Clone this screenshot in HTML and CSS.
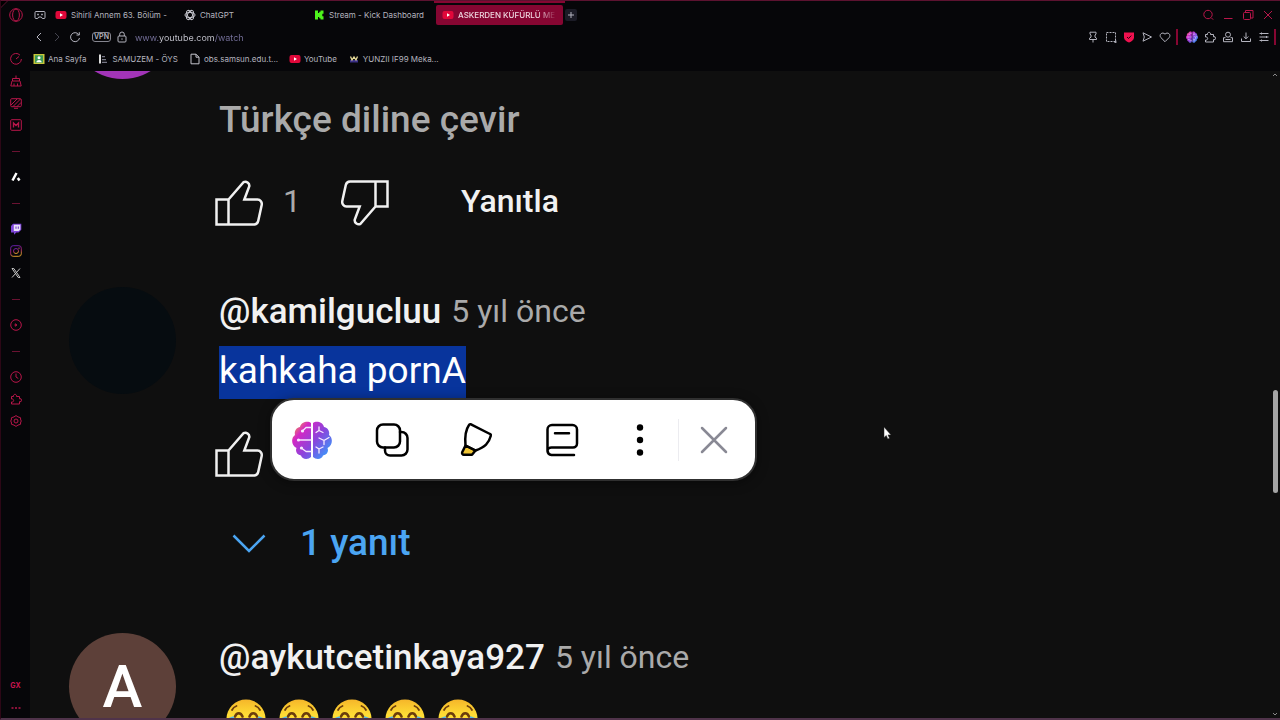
FILE: index.html
```html
<!DOCTYPE html>
<html lang="tr">
<head>
  <meta charset="UTF-8">
  <meta name="viewport" content="width=device-width, initial-scale=1">
  <title>YouTube</title>
  <link rel="stylesheet" href="styles.css">
</head>
<body>
  <!-- Shared icons -->
  <svg class="sprite" aria-hidden="true">
    <defs>
      <linearGradient id="brain-fill" x1="0" y1="0.1" x2="1" y2="0.9">
        <stop offset="0" stop-color="#f5a040"/>
        <stop offset="0.22" stop-color="#d428c4"/>
        <stop offset="0.55" stop-color="#8a45dc"/>
        <stop offset="1" stop-color="#2fa4ff"/>
      </linearGradient>
      <linearGradient id="insta" x1="0" y1="0" x2="0.3" y2="1">
        <stop offset="0" stop-color="#5b1fb0"/>
        <stop offset="0.6" stop-color="#a02070"/>
        <stop offset="1" stop-color="#d99a2b"/>
      </linearGradient>
      <linearGradient id="face" x1="0" y1="0" x2="0" y2="1">
        <stop offset="0" stop-color="#f5b62a"/>
        <stop offset="0.4" stop-color="#ffdd35"/>
        <stop offset="1" stop-color="#f9c62d"/>
      </linearGradient>
      <symbol id="youtube" viewBox="0 0 12 12">
        <rect x="0.5" y="2" width="11" height="8" rx="2" fill="#e0083a"/>
        <path d="M5 4.3v3.4L8 6z" fill="#fff"/>
      </symbol>
      <symbol id="brain" viewBox="0 0 40 40">
        <path stroke="none" fill="url(#brain-fill)" d="M19 3v34c-3 3-9 2.500-10-1.500C5 35 3 31.500 4.500 28-.5 26-1.500 18 3 15 2 11 4.500 7.500 8 7c1-5 8-6.500 11-4zM21 3c3-2.500 10-1 11 4 3.500.5 6 4 5 8 4.500 3 3.500 11-1.500 13 1.500 3.500-.5 7-4.500 7.500-1 4-7 4.500-10 1.500z"/>
        <g fill="none" stroke="#f6e9ff" stroke-width="1.300" stroke-linecap="round">
          <path d="M19 7.500h-5l-3 3M19 20H6.500M19 31.500h-5l-4-3M27 7v3.500l-3 2M27 10.500l4 2M27 18l5 2.500 5-3M32 20.500v4M27 33v-4l-3-2M27 29l4-2"/>
        </g>
        <g fill="#f6e9ff" stroke="none"><circle cx="10.500" cy="11" r="1.600"/><circle cx="6.500" cy="20" r="1.600"/><circle cx="9.500" cy="28" r="1.600"/></g>
      </symbol>
      <symbol id="puzzle" viewBox="0 0 12 12">
        <path d="M1.500 3.500h2a1.600 1.600 0 1 1 3 0h3v2.300a1.500 1.500 0 1 1 0 2.800V11h-8V9a1.600 1.600 0 1 0 0-3z"/>
      </symbol>
      <symbol id="like" viewBox="0 0 48 48">
        <path d="M1.500 20.500h12v25h-12zM13.500 20.500 28.500 3.200a4 4 0 0 1 5.800 4l-5 13.300h13.200a4.500 4.500 0 0 1 4.200 5.500l-3.500 16a4.500 4.500 0 0 1-4.200 3.500H13.500"/>
      </symbol>
      <symbol id="laugh" viewBox="0 0 40 40">
        <circle cx="20" cy="20" r="19.500" fill="url(#face)"/>
        <g fill="none" stroke="#6b3d0c" stroke-linecap="round">
          <path stroke-width="1.800" d="M6 11c1-2 2.500-3.300 4.500-4M34 11c-1-2-2.500-3.300-4.500-4"/>
          <path stroke-width="2.500" d="M9 17.500c1.500-4.500 6-4.500 7.500 0M23.500 17.500c1.500-4.500 6-4.500 7.500 0"/>
        </g>
        <path d="M8 23h24c0 14-24 14-24 0z" fill="#6b3d0c"/>
        <path d="M1 21c1-2 4-3.500 7-3.500 0 4-2 8-5 8s-3-2.500-2-4.500zM39 21c-1-2-4-3.500-7-3.500 0 4 2 8 5 8s3-2.500 2-4.500z" fill="#4fb6ea"/>
      </symbol>
    </defs>
  </svg>

  <div class="window">
    <svg class="window-corner" viewBox="0 0 10 10"><path d="M0 0h9L0 9z" fill="#000"/><path d="M0.500 10V8L8 0.500h2" fill="none" stroke="#5c1230"/></svg>

    <nav class="sidebar" aria-label="Kenar çubuğu">
      <button class="side-item logo" aria-label="Opera menüsü"><svg class="icon-lg" viewBox="0 0 14 14"><circle cx="7" cy="7" r="6.300"/><ellipse cx="7" cy="7" rx="3.400" ry="6"/></svg></button>
      <button class="side-item" aria-label="GX Control"><svg class="icon" viewBox="0 0 12 12"><path d="M10 2.200A5.400 5.400 0 1 0 11.400 6M6 6l3-2.500"/></svg></button>
      <button class="side-item" aria-label="GX Cleaner"><svg class="icon" viewBox="0 0 12 12"><path d="M6 .5v3M2.500 3.500h7v2.500h-7zM2 6 .8 11h10.400L10 6M4 8.500V11M7.500 8.500V11"/></svg></button>
      <button class="side-item" aria-label="GX Mods"><svg class="icon" viewBox="0 0 12 12"><rect x=".7" y="1.700" width="10.600" height="8" rx="1"/><path d="m1 8 6-6M3 9.500l7.500-7.500M7 9.500l4-4M4 11.300h4"/></svg></button>
      <button class="side-item" aria-label="Mod mağazası"><svg class="icon" viewBox="0 0 12 12"><rect x=".7" y=".7" width="10.600" height="10.600" rx="1"/><path d="M3.500 8.500V4L6 6.500 8.500 4v4.500" stroke-width="1.400"/></svg></button>
      <span class="side-line"></span>
      <button class="side-item" aria-label="Aria"><svg class="icon" viewBox="0 0 12 12"><path d="M6.500 2 2.500 9.500M7.800 7l1.700 2.500" stroke="#fff" stroke-width="2.500"/></svg></button>
      <span class="side-line"></span>
      <button class="side-item" aria-label="Twitch"><svg class="icon" viewBox="0 0 12 12"><path d="M1 3 3 .8h8.300v6L8.500 9.500H6.300L4 11.700V9.500H1z" fill="#7d45d8" stroke="none"/><path d="M3.800 1.800h6.500v4.600L8.700 8H3.800z" fill="#e9e0f8" stroke="none"/><path d="M6 3.500v2.300M8.300 3.500v2.300" stroke="#6a35c0"/></svg></button>
      <button class="side-item" aria-label="Instagram"><svg class="icon" viewBox="0 0 12 12"><g stroke="url(#insta)"><rect x=".7" y=".7" width="10.600" height="10.600" rx="2.500"/><circle cx="6" cy="6" r="2.500"/><circle cx="9" cy="3" r=".3"/></g></svg></button>
      <button class="side-item" aria-label="X"><svg class="icon" viewBox="0 0 12 12"><path d="M2 1.500h1.800l6.200 9H8.200zM10 1.500 2 10.500" stroke="#c4c4c4"/></svg></button>
      <span class="side-line"></span>
      <button class="side-item" aria-label="Oynatıcı"><svg class="icon" viewBox="0 0 12 12"><circle cx="6" cy="6" r="5.300"/><path d="M5.200 4.800v2.400L7 6z"/></svg></button>
      <span class="side-line"></span>
      <button class="side-item" aria-label="Geçmiş"><svg class="icon" viewBox="0 0 12 12"><circle cx="6" cy="6" r="5.300"/><path d="M6 2.500V6l2.300 1.500"/></svg></button>
      <button class="side-item" aria-label="Uzantılar"><svg class="icon"><use href="#puzzle"/></svg></button>
      <button class="side-item" aria-label="Ayarlar"><svg class="icon" viewBox="0 0 12 12"><path d="m6 .6 2 1.300 2.500.8.200 2.300.7 1-.7 1-.2 2.300-2.500.8-2 1.300-2-1.300-2.500-.8L1.300 7 .6 6l.7-1 .2-2.300L4 1.900z"/><circle cx="6" cy="6" r="2"/></svg></button>
      <div class="side-bottom">
        <button class="side-item gx">GX</button>
        <button class="side-item" aria-label="Daha fazla"><svg class="icon" viewBox="0 0 12 12"><path d="M1.500 7h2M5 7h2M8.500 7h2" stroke-width="1.500"/></svg></button>
      </div>
    </nav>

    <div class="main">
      <header class="chrome">
        <div class="row tabs">
          <button class="tool island" aria-label="Oyun köşesi"><svg class="icon" viewBox="0 0 12 12"><path d="M2 2.500h8a1 1 0 0 1 1 1v5a1 1 0 0 1-1 1H8.300L7.300 8H4.700L3.700 9.500H2a1 1 0 0 1-1-1v-5a1 1 0 0 1 1-1z"/><path d="M3.200 5.500h1.600M7.200 5.500h1.600" stroke-width="1.500"/></svg></button>
          <button class="tab"><svg class="favicon"><use href="#youtube"/></svg><span class="tab-title">Sihirli Annem 63. Bölüm -</span></button>
          <button class="tab"><svg class="favicon line" viewBox="0 0 12 12"><g><ellipse cx="6" cy="6" rx="5" ry="2.600"/><ellipse cx="6" cy="6" rx="5" ry="2.600" transform="rotate(60 6 6)"/><ellipse cx="6" cy="6" rx="5" ry="2.600" transform="rotate(120 6 6)"/></g></svg><span class="tab-title">ChatGPT</span></button>
          <button class="tab"><svg class="favicon" viewBox="0 0 12 12"><path d="M2 1.500h3v2.500h1.200V2.700H7.500V1.500h3v3.300H9.300V7.200h1.200v3.300h-3V9.300H6.200V8H5v2.500H2z" fill="#4df41c"/></svg><span class="tab-title">Stream - Kick Dashboard</span></button>
          <button class="tab active"><svg class="favicon"><use href="#youtube"/></svg><span class="tab-title">ASKERDEN KÜFÜRLÜ ME</span></button>
          <button class="new-tab" aria-label="Yeni sekme"><svg class="icon" viewBox="0 0 12 12"><path d="M6 3v6M3 6h6"/></svg></button>
          <div class="window-buttons">
            <button class="tool" aria-label="Ara"><svg class="icon" viewBox="0 0 12 12"><circle cx="6" cy="5.500" r="4.200"/><path d="m9.200 8.700 2 2"/></svg></button>
            <button class="tool" aria-label="Küçült"><svg class="icon" viewBox="0 0 12 12"><path d="M2 9.500h8.500"/></svg></button>
            <button class="tool" aria-label="Geri yükle"><svg class="icon" viewBox="0 0 12 12"><rect x="1.500" y="3.500" width="7" height="7" rx="1"/><path d="M3.500 3.500v-2h7.500v7.500H8.500"/></svg></button>
            <button class="tool" aria-label="Kapat"><svg class="icon" viewBox="0 0 12 12"><path d="m2 2 8 8M10 2l-8 8"/></svg></button>
          </div>
        </div>

        <div class="row address">
          <button class="tool" aria-label="Geri"><svg class="icon" viewBox="0 0 12 12"><path d="M8 2 4 6l4 4"/></svg></button>
          <button class="tool dim" aria-label="İleri"><svg class="icon" viewBox="0 0 12 12"><path d="m4 2 4 4-4 4"/></svg></button>
          <button class="tool" aria-label="Yenile"><svg class="icon" viewBox="0 0 12 12"><path d="M9.700 3.500A4.500 4.500 0 1 0 10.500 7M10.300 1.200v2.800H7.500"/></svg></button>
          <button class="vpn">VPN</button>
          <svg class="icon lock" viewBox="0 0 12 12"><rect x="2" y="5" width="8" height="6" rx="1"/><path d="M3.700 5V3.300a2.300 2.300 0 0 1 4.600 0V5M6 7.300v1.500"/></svg>
          <input class="url" type="text" aria-label="Adres" value="www.youtube.com/watch">
          <div class="tools">
            <button class="tool" aria-label="Sabitle"><svg class="icon" viewBox="0 0 12 12"><path d="M3 1.200h6v2L8 4v2.200l1.500 1v1.300h-7V7.200l1.500-1V4L3 3.200zM6 8.500v3"/></svg></button>
            <button class="tool" aria-label="Anlık görüntü"><svg class="icon" viewBox="0 0 12 12"><rect x="1.500" y="1.500" width="9" height="9" stroke-dasharray="2 1"/><path d="M9 11h2.500M10.700 9v3"/></svg></button>
            <button class="tool" aria-label="Reklam engelleyici"><svg class="icon" viewBox="0 0 12 12"><path d="M1 1.500h10v5C11 9 8.500 10.500 6 11.500 3.500 10.500 1 9 1 6.500z" fill="#f0114f" stroke="none"/><path d="M4 6l1.500 1.500L8.300 4.600" stroke="#25000d"/></svg></button>
            <button class="tool" aria-label="Gönder"><svg class="icon" viewBox="0 0 12 12"><path d="M2 1.800 10.500 6 2 10.200 3.300 6z"/></svg></button>
            <button class="tool" aria-label="Favorilere ekle"><svg class="icon" viewBox="0 0 12 12"><path d="M6 10.700 1.800 6.500C-.5 3.500 3.500.3 6 3.200 8.500.3 12.500 3.500 10.200 6.500z"/></svg></button>
            <span class="bar"></span>
            <button class="tool ai" aria-label="Yapay zeka"><svg class="icon"><use href="#brain"/></svg></button>
            <button class="tool" aria-label="Eklentiler"><svg class="icon"><use href="#puzzle"/></svg></button>
            <button class="tool" aria-label="Profil"><svg class="icon" viewBox="0 0 12 12"><circle cx="6" cy="3.700" r="2.500"/><path d="M3.500 6.700h-2v4h9v-4h-2M3.500 8.500h5"/></svg></button>
            <button class="tool" aria-label="İndirilenler"><svg class="icon" viewBox="0 0 12 12"><path d="M6 1.500v6M3.700 5.500 6 7.800l2.300-2.300M1.500 7.500v3h9v-3"/></svg></button>
            <button class="tool" aria-label="Kolay kurulum"><svg class="icon" viewBox="0 0 12 12"><path d="M1.500 2.500h9M1.500 6h9M1.500 9.500h9M3.500 1.500v2M8.500 5v2M3.500 8.500v2"/></svg></button>
            <span class="bar last"></span>
          </div>
        </div>

        <nav class="row bookmarks" aria-label="Yer imleri">
          <a class="bookmark" href="#"><svg class="favicon" viewBox="0 0 12 12"><rect x=".5" y="1" width="11" height="10" fill="#c7c63a"/><rect x="2" y="2.300" width="8" height="7.400" fill="#3c9a58"/><circle cx="6" cy="4.800" r="1.500" fill="#fff"/><path d="M3.300 9.300c.5-3 5-3 5.400 0z" fill="#fff"/></svg>Ana Sayfa</a>
          <a class="bookmark" href="#"><svg class="favicon" viewBox="0 0 12 12"><path d="M2 1.500h2v9H2z" fill="#ddd"/><path d="M5 3h3v1.300H5zM5 6h4v1.300H5zM5 8.700h5V10H5z" fill="#777786"/></svg>SAMUZEM - ÖYS</a>
          <a class="bookmark" href="#"><svg class="favicon line" viewBox="0 0 12 12"><path d="M2 1.200h5L10 4.200v6.600H2zM7 1.200v3h3"/></svg>obs.samsun.edu.t...</a>
          <a class="bookmark" href="#"><svg class="favicon"><use href="#youtube"/></svg>YouTube</a>
          <a class="bookmark" href="#"><svg class="favicon" viewBox="0 0 12 12"><path d="M2 7h8v2.500H2z" fill="#3a2f86"/><path d="m2.500 3.500 1.500 3.500L6 4l2 3 1.500-3.500" fill="none" stroke="#e8dc9a" stroke-width="1.300"/></svg>YUNZII IF99 Meka...</a>
        </nav>
      </header>

      <div class="viewport">
        <main class="comments">
          <article class="comment scrolled">
            <div class="avatar purple"></div>
            <div class="body">
              <button class="translate">Türkçe diline çevir</button>
              <div class="actions">
                <button class="vote" aria-label="Beğen"><svg><use href="#like"/></svg></button>
                <span class="count">1</span>
                <button class="vote down" aria-label="Beğenme"><svg><use href="#like"/></svg></button>
                <button class="reply">Yanıtla</button>
              </div>
            </div>
          </article>

          <article class="comment">
            <div class="avatar dark"></div>
            <div class="body">
              <div class="author"><a class="name" href="#">@kamilgucluu</a><a class="time" href="#">5 yıl önce</a></div>
              <p class="text"><span class="selected">kahkaha pornA</span></p>
              <div class="actions">
                <button class="vote" aria-label="Beğen"><svg><use href="#like"/></svg></button>
              </div>
              <button class="replies"><svg viewBox="0 0 34 20"><path d="M1.500 1.500 17 17 32.500 1.500"/></svg><span class="replies-label">1 yanıt</span></button>

              <!-- Selection popup -->
              <div class="popup" role="toolbar" aria-label="Metin seçimi">
                <button class="popup-item" aria-label="Yapay zeka"><svg><use href="#brain"/></svg></button>
                <button class="popup-item" aria-label="Kopyala"><svg viewBox="0 0 40 40"><rect x="5" y="4.500" width="23" height="23" rx="6"/><path d="M28 12h1.500a6 6 0 0 1 6 6v11.500a6 6 0 0 1-6 6H18a5 5 0 0 1-5-5v-3"/></svg></button>
                <button class="popup-item marker" aria-label="Vurgula"><svg viewBox="0 0 40 40"><path d="m8.500 25.500 10 5-3.500 4.300H7a1.800 1.800 0 0 1-1.800-2.500z" fill="#f0c534"/><path d="M13.500 4.200 33 14a1.500 1.500 0 0 1 .8 1.800C32 23 28 27 18.500 30.500l-10-5C7.500 15 8.500 10 12 5a1.300 1.300 0 0 1 1.500-.8z"/></svg></button>
                <button class="popup-item" aria-label="Sözlük"><svg viewBox="0 0 40 40"><path d="M32 35H9.500A4.500 4.500 0 0 1 5.500 31V9.500a4.500 4.500 0 0 1 4.500-4.500h20.500a4.500 4.500 0 0 1 4.500 4.500v14a4 4 0 0 1-4 4H9.500a4 3.700 0 0 0-4 3.700M13 13.200h14"/></svg></button>
                <button class="popup-item more" aria-label="Diğer"><svg viewBox="0 0 40 40"><g fill="#000" stroke="none"><circle cx="20" cy="7.500" r="3.200"/><circle cx="20" cy="20" r="3.200"/><circle cx="20" cy="32.500" r="3.200"/></g></svg></button>
                <span class="popup-divider"></span>
                <button class="popup-item close" aria-label="Kapat"><svg viewBox="0 0 40 40"><path d="m8 8 24 24M32 8 8 32"/></svg></button>
              </div>
            </div>
          </article>

          <article class="comment">
            <div class="avatar brown">A</div>
            <div class="body">
              <div class="author"><a class="name" href="#">@aykutcetinkaya927</a><a class="time" href="#">5 yıl önce</a></div>
              <p class="text emojis">
                <svg role="img" aria-label="gülen yüz"><use href="#laugh"/></svg>
                <svg role="img" aria-label="gülen yüz"><use href="#laugh"/></svg>
                <svg role="img" aria-label="gülen yüz"><use href="#laugh"/></svg>
                <svg role="img" aria-label="gülen yüz"><use href="#laugh"/></svg>
                <svg role="img" aria-label="gülen yüz"><use href="#laugh"/></svg>
              </p>
            </div>
          </article>
        </main>

        <div class="scrollbar">
          <svg viewBox="0 0 8 8"><path d="m2 5 2-2 2 2"/></svg>
          <div class="track-above"></div>
          <div class="thumb"></div>
          <div class="track-below"></div>
          <svg viewBox="0 0 8 8"><path d="m2 3 2 2 2-2"/></svg>
        </div>
      </div>
    </div>

    <svg class="cursor" viewBox="0 0 9 14"><path d="M1 1v10.500l2.300-2 1.500 3.500 1.700-.8L5 8.900h3z" fill="#fff" stroke="#222" stroke-width=".5"/></svg>
  </div>
</body>
</html>
```
FILE: styles.css
```css
* {
  box-sizing: border-box;
}

body {
  margin: 0;
  background: #060609;
  color: #f1f1f1;
  font-family: Roboto, "Liberation Sans", sans-serif;
}

button {
  padding: 0;
  border: 0;
  background: none;
  color: inherit;
  font: inherit;
  cursor: pointer;
}

a {
  color: inherit;
  text-decoration: none;
}

svg {
  display: block;
  flex: none;
  fill: none;
}

.sprite {
  position: absolute;
  width: 0;
  height: 0;
}

.window {
  position: relative;
  display: flex;
  height: 100vh;
  overflow: hidden;
  border: 1px solid #5c1230;
  border-left-color: #2c0716;
  border-right: 0;
  border-bottom: 2px solid #50334a;
}

.window-corner {
  position: absolute;
  top: -1px;
  left: -1px;
  width: 10px;
  height: 10px;
}

.icon {
  width: 12px;
  height: 12px;
  stroke: currentColor;
}

.icon-lg {
  width: 14px;
  height: 14px;
  stroke: currentColor;
}

/* Sidebar */
.sidebar {
  display: flex;
  flex-direction: column;
  flex: none;
  width: 29px;
  padding-top: 3px;
  color: #b8164a;
}

.side-item {
  display: flex;
  flex: none;
  align-items: center;
  justify-content: center;
  height: 22px;
}

.logo {
  margin-bottom: 22px;
}

.side-line {
  display: flex;
  flex: none;
  align-items: center;
  justify-content: center;
  height: 30px;
}

.side-line::after {
  content: "";
  width: 8px;
  height: 1px;
  background: #6a1232;
}

.side-bottom {
  display: flex;
  flex-direction: column;
  margin-top: auto;
}

.gx {
  font: 700 7px Inter, sans-serif;
  color: #c91450;
}

/* Browser bars */
.main {
  display: flex;
  flex-direction: column;
  flex: 1;
  min-width: 0;
}

.chrome {
  flex: none;
  padding: 3px 0 1px;
  color: #b4b4bf;
  font: 8px Inter, "Liberation Sans", sans-serif;
}

.row {
  display: flex;
  align-items: center;
  height: 22px;
}

.tool {
  display: flex;
  align-items: center;
  justify-content: center;
  width: 18px;
  height: 18px;
}

.dim {
  color: #44444f;
}

.tabs .island {
  width: 19px;
}

.tab {
  position: relative;
  display: flex;
  align-items: center;
  gap: 4px;
  width: 127px;
  height: 20px;
  margin-right: 2px;
  padding: 0 6px;
  border-radius: 2px;
}

.tab-title {
  flex: 1;
  overflow: hidden;
  text-align: left;
  white-space: nowrap;
}

.active {
  background: #860632;
  color: #eed6df;
  font-weight: 500;
}

.active .tab-title {
  mask-image: linear-gradient(to right, #000 80%, transparent);
}

.active::before {
  content: "";
  position: absolute;
  top: -5px;
  left: -2px;
  right: -2px;
  height: 3px;
  background: #860632;
}

.favicon {
  width: 12px;
  height: 12px;
}

.line {
  stroke: #c4c4cc;
}

.new-tab {
  width: 12px;
  height: 12px;
  border-radius: 2px;
  background: #1b1b26;
}

.window-buttons {
  display: flex;
  gap: 2px;
  margin-left: auto;
  padding-right: 3px;
  color: #b8164a;
}

.vpn {
  width: 19px;
  height: 10px;
  margin: 0 5px 0 8px;
  border: 1px solid #85858f;
  border-radius: 3px;
  font-size: 7px;
  font-weight: 600;
  line-height: 8px;
}

.url {
  flex: 1;
  min-width: 0;
  margin-left: 7px;
  padding: 0;
  border: 0;
  outline: 0;
  background: linear-gradient(to right, #76719c 24px, #c8c8d2 24px, #c8c8d2 79px, #76719c 79px);
  background-clip: text;
  color: transparent;
  font: inherit;
  font-size: 9px;
}

.tools {
  display: flex;
  align-items: center;
}

.bar {
  width: 2px;
  height: 16px;
  margin: 0 5px 0 2px;
  background: #860632;
}

.last {
  margin: 0 4px 0 1px;
}

.bookmarks {
  gap: 11px;
  padding-left: 3px;
}

.bookmark {
  display: flex;
  align-items: center;
  gap: 3px;
  white-space: nowrap;
}

/* Comments */
.viewport {
  display: flex;
  flex: 1;
  min-height: 0;
  overflow: hidden;
  background: #0f0f0f;
}

.comments {
  display: flex;
  flex-direction: column;
  flex: 1;
  gap: 42px;
  min-width: 0;
  padding-left: 39px;
}

.comment {
  display: flex;
  flex: none;
  gap: 43px;
}

.avatar {
  flex: none;
  width: 107px;
  height: 107px;
  border-radius: 50%;
  font-size: 60px;
  font-weight: 500;
  line-height: 107px;
  text-align: center;
}

.purple {
  background: #a234b8;
}

.dark {
  background: #060c10;
}

.brown {
  background: #5d4039;
  color: #fff;
}

.body {
  position: relative;
  flex: 1;
  min-width: 0;
}

.scrolled .avatar {
  margin-top: -99px;
}

.scrolled .body {
  padding-top: 24px;
}

.translate {
  display: block;
  padding-bottom: 3px;
  color: #aaa;
  font-size: 37px;
  font-weight: 500;
  line-height: 50px;
}

.author {
  display: flex;
  align-items: center;
  gap: 10px;
  height: 48px;
}

.name {
  font-size: 35px;
  font-weight: 500;
}

.time {
  color: #aaa;
  font-size: 32px;
}

.text {
  margin: 11px 0 0;
  font-size: 37px;
  line-height: 50px;
}

.selected {
  display: block;
  width: fit-content;
  padding-bottom: 3px;
  background: #08349c;
  color: #fff;
}

.actions {
  display: flex;
  align-items: center;
  height: 85px;
  margin: 12px 0 0 -4px;
  font-size: 32px;
}

.vote svg {
  width: 48px;
  height: 48px;
  stroke: #f1f1f1;
  stroke-width: 2.5px;
}

.down {
  margin-left: 40px;
  transform: rotate(180deg);
}

.count {
  margin-left: 20px;
  padding-bottom: 3px;
  color: #aaa;
}

.reply {
  margin-left: 72px;
  padding-bottom: 3px;
  font-weight: 500;
}

.replies {
  display: flex;
  align-items: center;
  gap: 34px;
  height: 95px;
  padding-left: 13px;
  color: #4ba5f2;
  font-size: 37px;
  font-weight: 500;
}

.replies-label {
  padding-bottom: 3px;
}

.replies svg {
  width: 34px;
  height: 20px;
  stroke: currentColor;
  stroke-width: 2.5px;
}

.emojis {
  display: flex;
  align-items: center;
  gap: 13px;
  height: 53px;
  padding-left: 7px;
}

.emojis svg {
  width: 40px;
  height: 40px;
}

/* Selection popup */
.popup {
  position: absolute;
  top: 111px;
  left: 51px;
  display: flex;
  align-items: center;
  height: 83px;
  padding-right: 6px;
  border: 2px solid #303030;
  border-radius: 24px;
  background: #fff;
  box-shadow: 0 2px 12px rgba(0, 0, 0, 0.4);
}

.popup-item {
  display: flex;
  justify-content: center;
  width: 80px;
}

.popup-item svg {
  width: 40px;
  height: 40px;
  stroke: #000;
  stroke-width: 2.5px;
  stroke-linecap: round;
  stroke-linejoin: round;
}

.marker {
  margin: 0 5px;
}

.popup .more {
  width: 76px;
}

.popup-divider {
  width: 1px;
  height: 42px;
  background: #ececf0;
}

.popup .close {
  width: 70px;
}

.popup .close svg {
  stroke: #898994;
}

/* Scrollbar */
.scrollbar {
  display: flex;
  flex-direction: column;
  align-items: center;
  flex: none;
  width: 10px;
}

.scrollbar svg {
  width: 8px;
  height: 8px;
  stroke: #888;
}

.track-above {
  flex: 311;
}

.thumb {
  width: 5px;
  height: 103px;
  border-radius: 3px;
  background: #a5a5a5;
}

.track-below {
  flex: 217;
}

.cursor {
  position: absolute;
  top: 425px;
  left: 882px;
  width: 9px;
  height: 14px;
}
```
